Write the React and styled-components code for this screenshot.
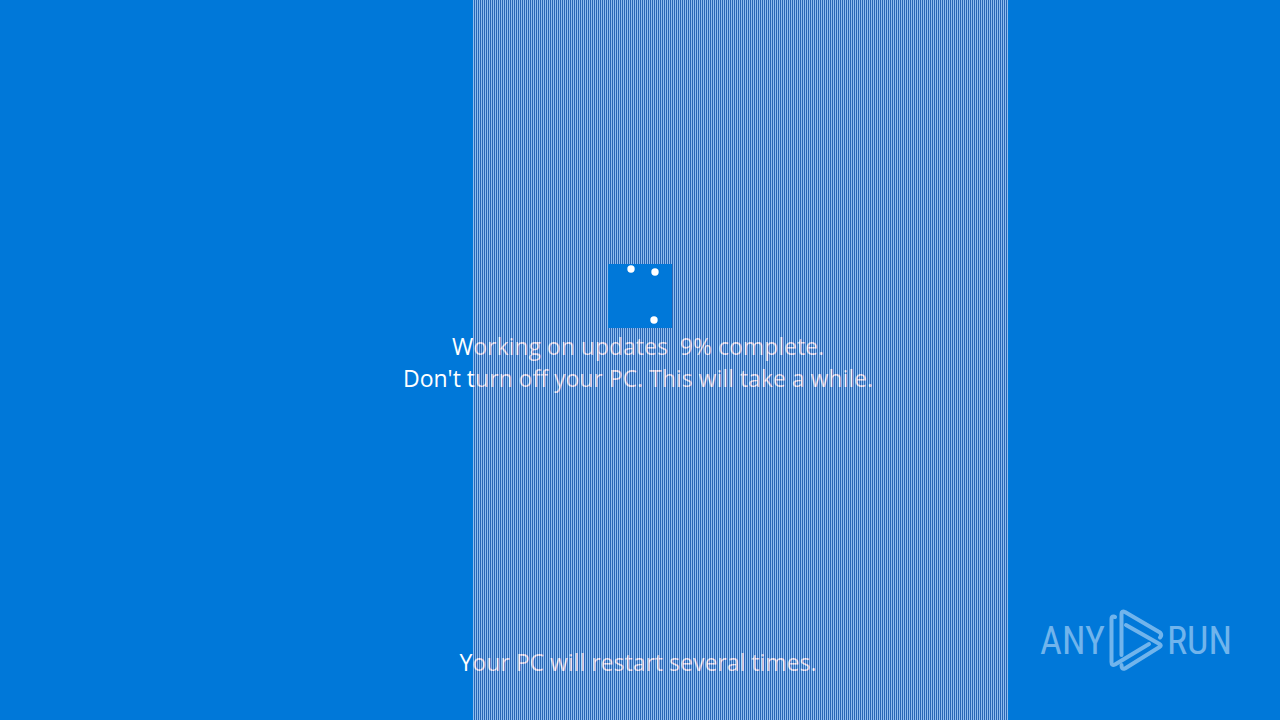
import React from "react"
import styled, { createGlobalStyle } from "styled-components"

const DOTS = [
  { cx: 23, cy: 5 },
  { cx: 47, cy: 8 },
  { cx: 46, cy: 56 },
]

const App = () => {
  return (
    <>
      <GlobalStyle />
      <Screen>
        <Status role="status">
          <Spinner viewBox="0 0 64 64" aria-hidden="true">
            {DOTS.map((dot, index) => (
              <circle key={index} cx={dot.cx} cy={dot.cy} r="3.7" fill="#fff" />
            ))}
          </Spinner>
          <Message>Working on updates{"\u00a0 "}9% complete.</Message>
          <Message>Don't turn off your PC. This will take a while.</Message>
        </Status>
        <Message>Your PC will restart several times.</Message>
        <Stripes aria-hidden="true" />
        <Watermark>
          <span>ANY</span>
          <PlayMark />
          <span>RUN</span>
        </Watermark>
      </Screen>
    </>
  )
}

const PlayMark = () => (
  <Mark viewBox="0 0 58 66" aria-hidden="true">
    <path d="M8 9L6.500 8.500Q4.500 8.500 4.500 11V54Q4.500 58 8 56.500L42 36" />
    <path d="M14.500 47V6Q14.500 2.500 18 4L53 24.500Q55.500 27 53 29.500" />
    <path d="M19 17L52.500 36Q55 37.500 52.500 39L18 60.500Q14.500 62 14.500 57" />
  </Mark>
)

export default App

const GlobalStyle = createGlobalStyle`
  body {
    margin: 0;
    background: #0078d9;
  }
`

const Screen = styled.main`
  position: relative;
  display: flex;
  flex-direction: column;
  align-items: center;
  justify-content: space-between;
  box-sizing: border-box;
  min-height: 100vh;
  padding: 264px 4px 42px 0;
  overflow: hidden;
  color: #fff;
  font-family: "Open Sans", "Noto Sans", sans-serif;
`

// Sits above the messages so they show through between the lines
const Stripes = styled.div`
  position: absolute;
  top: 0;
  bottom: 0;
  left: 473px;
  width: 535px;
  background: repeating-linear-gradient(
    to right,
    rgba(250, 240, 255, 0.57) 0 1px,
    rgba(100, 75, 128, 0.4) 1px 2px
  );
`

const Status = styled.section`
  display: flex;
  flex-direction: column;
  align-items: center;
`

const Spinner = styled.svg`
  position: relative;
  z-index: 1;
  width: 64px;
  height: 64px;
  margin: 0 0 2px 4px;
  background: #0078d9;
`

const Message = styled.p`
  margin: 0;
  font-size: 23px;
  line-height: 32px;
  text-align: center;
`

const Watermark = styled.div`
  position: absolute;
  right: 48px;
  bottom: 46px;
  display: flex;
  align-items: center;
  gap: 2px;
  color: #70b4ec;
  font-family: "Roboto Condensed", "Open Sans Condensed", sans-serif;
  font-size: 38px;
  line-height: 66px;
`

const Mark = styled.svg`
  width: 58px;
  height: 66px;
  fill: none;
  stroke: #70b4ec;
  stroke-width: 4;
  stroke-linejoin: round;
  stroke-linecap: round;
`
